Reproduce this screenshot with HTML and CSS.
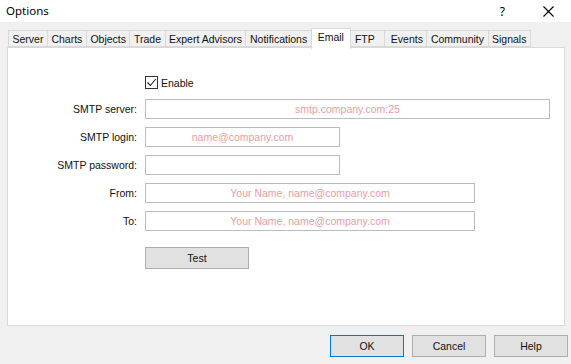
FILE: index.html
```html
<!DOCTYPE html>
<html>
<head>
<meta charset="utf-8">
<link rel="stylesheet" href="styles.css">
</head>
<body>
<div class="window">
  <header class="titlebar">
    <span class="title">Options</span>
    <span class="controls">
      <span class="help-btn">?</span>
      <svg class="close-btn" width="11" height="11" viewBox="0 0 11 11"><path d="M0.5 0.5 L10.5 10.5 M10.5 0.5 L0.5 10.5" stroke="#000" stroke-width="1.1" fill="none"/></svg>
    </span>
  </header>
  <nav class="tabs">
    <span class="tab">Server</span>
    <span class="tab">Charts</span>
    <span class="tab">Objects</span>
    <span class="tab">Trade</span>
    <span class="tab">Expert Advisors</span>
    <span class="tab">Notifications</span>
    <span class="tab active">Email</span>
    <span class="tab ftp">FTP</span>
    <span class="tab events">Events</span>
    <span class="tab">Community</span>
    <span class="tab">Signals</span>
  </nav>
  <section class="panel">
    <div class="form">
      <span></span>
      <label class="check">
        <span class="box"><svg width="11" height="11" viewBox="0 0 11 11"><path d="M1.5 5.5 L4.3 8.5 L9.8 2" stroke="#222" stroke-width="1.1" fill="none"/></svg></span>
        <span>Enable</span>
      </label>

      <span class="label first">SMTP server:</span>
      <div class="field first w-server">smtp.company.com:25</div>

      <span class="label">SMTP login:</span>
      <div class="field w-login">name@company.com</div>

      <span class="label">SMTP password:</span>
      <div class="field w-login"></div>

      <span class="label">From:</span>
      <div class="field w-from">Your Name, name@company.com</div>

      <span class="label">To:</span>
      <div class="field w-from">Your Name, name@company.com</div>

      <span></span>
      <button class="btn test">Test</button>
    </div>
  </section>
  <footer class="footer">
    <button class="btn dlg default">OK</button>
    <button class="btn dlg">Cancel</button>
    <button class="btn dlg">Help</button>
  </footer>
</div>
</body>
</html>
```
FILE: styles.css
```css
html, body {
  margin: 0;
  padding: 0;
}
body {
  width: 571px;
  height: 364px;
  background: #f0f0f0;
  font-family: "Liberation Sans", Arial, sans-serif;
  font-size: 10.5px;
  color: #111;
  overflow: hidden;
}
.window {
  display: flex;
  flex-direction: column;
  height: 364px;
}
.titlebar {
  height: 22px;
  background: #fff;
  display: flex;
  align-items: center;
  justify-content: space-between;
  padding: 0 17px 0 6px;
  box-sizing: border-box;
}
.title {
  font-family: "Noto Sans", "Open Sans", sans-serif;
  font-size: 11.5px;
  color: #000;
  margin-top: -1px;
}
.controls {
  display: flex;
  align-items: center;
  gap: 38px;
}
.help-btn {
  font-family: "Noto Sans", sans-serif;
  font-size: 12px;
  color: #000;
}
.close-btn {
  display: block;
}
.tabs {
  display: flex;
  align-items: flex-start;
  padding: 6px 0 0 8px;
  height: 19px;
  position: relative;
  z-index: 1;
}
.tab {
  margin-top: 2px;
  height: 17px;
  line-height: 16px;
  padding: 0 3.5px;
  border: 1px solid #d9d9d9;
  border-left: none;
  background: #f0f0f0;
  box-sizing: border-box;
  color: #111;
  white-space: nowrap;
}
.tab:first-child {
  border-left: 1px solid #d9d9d9;
}
.tab.active {
  margin-top: 0;
  height: 21px;
  line-height: 17px;
  background: #fff;
  border: 1px solid #d9d9d9;
  border-bottom: none;
  padding: 0 6px;
  margin-left: -1px;
}
.tab.ftp {
  padding: 0 9px 0 4px;
}
.tab.events {
  padding: 0 3.5px 0 6px;
}
.panel {
  margin: 0 6px 0 7px;
  height: 279px;
  background: #fff;
  border: 1px solid #d9d9d9;
  box-sizing: border-box;
}
.form {
  display: grid;
  grid-template-columns: 129px auto;
  column-gap: 8px;
  row-gap: 8px;
  align-items: center;
  justify-items: start;
  padding-top: 28px;
}
.label {
  justify-self: end;
  color: #111;
}
.check {
  display: flex;
  align-items: center;
  gap: 3px;
  height: 13px;
}
.box {
  width: 13px;
  height: 13px;
  border: 1px solid #333;
  box-sizing: border-box;
  display: flex;
  align-items: center;
  justify-content: center;
  background: #fff;
}
.box svg {
  display: block;
}
.first {
  margin-top: 2px;
}
.field {
  height: 20px;
  box-sizing: border-box;
  border: 1px solid #bcbcbc;
  color: #f29aa2;
  text-align: center;
  line-height: 18px;
  background: #fff;
}
.w-server { width: 405px; }
.w-login { width: 195px; }
.w-from { width: 330px; }
.btn {
  font-family: "Liberation Sans", Arial, sans-serif;
  font-size: 10.5px;
  color: #111;
  background: #e1e1e1;
  border: 1px solid #adadad;
  box-sizing: border-box;
  height: 22px;
  padding: 0;
}
.test {
  width: 104px;
  margin-top: 8px;
}
.footer {
  display: flex;
  justify-content: flex-end;
  gap: 8px;
  padding: 9px 3px 0 0;
}
.dlg {
  width: 74px;
}
.dlg.default {
  border-color: #0078d7;
}
```
